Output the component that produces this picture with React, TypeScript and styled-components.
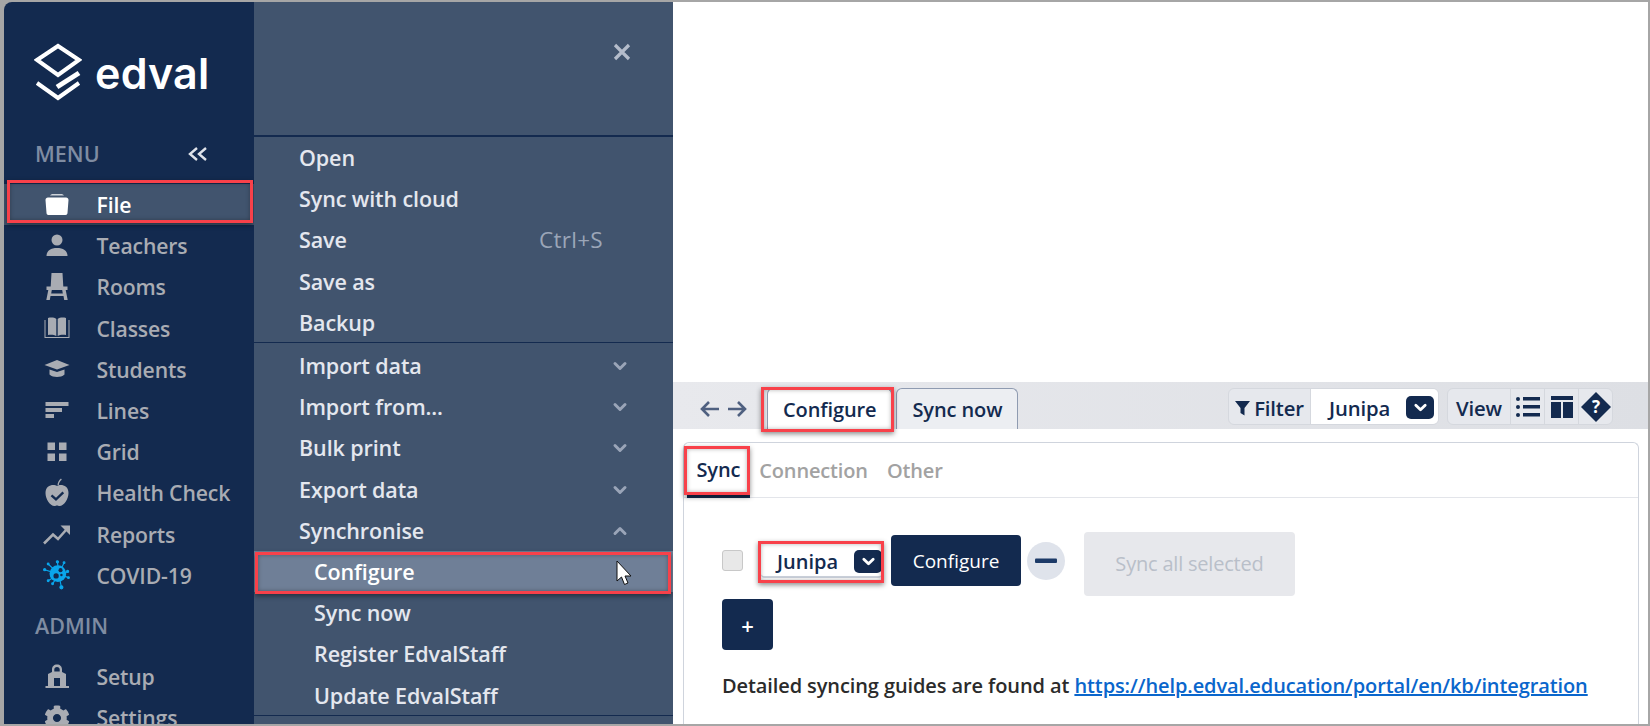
import React from "react";
import styled, { createGlobalStyle, css } from "styled-components";
import { FaCog } from "react-icons/fa";

const Global = createGlobalStyle`
  html, body { margin: 0; padding: 0; height: 726px; overflow: hidden; background: #a6a6a6; }
  * { box-sizing: border-box; }
  #root { font-family: "Open Sans", "Noto Sans", sans-serif; }
`;

const NAVY = "#132a4f";
const RED = "#f8414a";

const marked = css`
  &::after {
    content: "";
    position: absolute;
    border: 3px solid ${RED};
    box-shadow: 0 2px 5px rgba(0, 0, 0, 0.45), inset 0 0 4px rgba(0, 0, 0, 0.3);
    pointer-events: none;
    z-index: 3;
  }
`;

const Frame = styled.div`
  width: 1650px;
  height: 726px;
  padding: 2px 2px 2px 4px;
  display: flex;
  background: #a6a6a6;
  overflow: hidden;
`;

const Sidebar = styled.nav`
  width: 250px;
  flex: none;
  background: ${NAVY};
  border-top-left-radius: 8px;
  overflow: hidden;
  position: relative;
`;

const Brand = styled.div`
  height: 133px;
  padding: 41px 0 0 30px;
  display: flex;
  align-items: flex-start;
  gap: 13px;
  color: #fff;
`;

const BrandName = styled.span`
  font-family: Inter, sans-serif;
  font-weight: 600;
  font-size: 43px;
  line-height: 48px;
  letter-spacing: 0.2px;
  margin-top: 6px;
`;

const MenuHead = styled.div<{ $h: number; $lift?: number }>`
  height: ${(p) => p.$h}px;
  padding: 0 45px ${(p) => p.$lift || 0}px 31px;
  display: flex;
  align-items: center;
  justify-content: space-between;
  color: #7f8ca2;
  font-size: 21.5px;
  font-weight: 600;
`;

const MenuList = styled.div`
  display: flex;
  flex-direction: column;
`;

const MenuItem = styled.div<{ $active?: boolean }>`
  position: relative;
  height: 41.2px;
  display: flex;
  align-items: center;
  gap: 24.5px;
  padding-left: 38px;
  font-size: 21.2px;
  font-weight: 600;
  letter-spacing: -0.15px;
  color: ${(p) => (p.$active ? "#fff" : "#a9acb3")};
  background: ${(p) => (p.$active ? "#41546e" : "transparent")};
  ${(p) =>
    p.$active &&
    css`
      ${marked}
      &::after {
        left: 3px;
        right: 1px;
        top: -4px;
        bottom: 2px;
      }
    `}
`;

const IconBox = styled.span<{ $c?: string }>`
  width: 30px;
  height: 30px;
  flex: none;
  display: flex;
  align-items: center;
  justify-content: center;
  color: ${(p) => p.$c || "currentColor"};
  svg { display: block; }
`;

const Panel = styled.div`
  width: 419px;
  flex: none;
  background: #41546e;
  color: #e4e7ee;
  position: relative;
  overflow: hidden;
`;

const PanelHead = styled.div`
  height: 133px;
  display: flex;
  justify-content: flex-end;
  padding: 41px 42px 0 0;
  color: #b4bccb;
`;

const PanelSection = styled.div<{ $pad: number; $first?: boolean }>`
  border-top: ${(p) => (p.$first ? 2 : 1)}px solid ${NAVY};
  margin-top: ${(p) => (p.$first ? 0 : -1)}px;
  padding-top: ${(p) => p.$pad}px;
  display: flex;
  flex-direction: column;
`;

const PanelRow = styled.div<{ $sub?: boolean; $active?: boolean }>`
  position: relative;
  height: 41.2px;
  flex: none;
  display: flex;
  align-items: center;
  justify-content: space-between;
  padding: 0 45px 0 ${(p) => (p.$sub ? 60 : 45)}px;
  font-size: 21.5px;
  font-weight: 600;
  letter-spacing: -0.1px;
  ${(p) =>
    p.$active &&
    css`
      background: #6f7f97;
      color: #fff;
      ${marked}
      &::after {
        left: 1px;
        right: 2px;
        top: 1px;
        bottom: -2px;
      }
    `}
`;

const Shortcut = styled.span`
  color: #9ba6b8;
  font-size: 22.5px;
  font-weight: 400;
  letter-spacing: 0.3px;
  padding-right: 25px;
`;

const Caret = styled.span`
  color: #9aa5b8;
`;

const Pointer = styled.svg`
  position: absolute;
  left: 361px;
  top: 9px;
  z-index: 4;
`;

const Main = styled.main`
  flex: 1;
  min-width: 0;
  display: flex;
  flex-direction: column;
  justify-content: flex-end;
  background: #fff;
  overflow: hidden;
`;

const Toolbar = styled.div`
  height: 47px;
  flex: none;
  display: flex;
  align-items: flex-end;
  padding: 0 35px 0 27px;
  background: linear-gradient(to right, #e8e9ed, #dddfe4);
`;

const Arrows = styled.div`
  display: flex;
  gap: 7px;
  color: #4f6080;
  align-self: center;
  margin-right: 20px;
  margin-top: 7px;
`;

const PageTab = styled.div<{ $active?: boolean }>`
  position: relative;
  height: 41px;
  padding: 0 15px;
  margin-right: ${(p) => (p.$active ? 4 : 6)}px;
  display: flex;
  align-items: center;
  font-size: 20px;
  font-weight: 600;
  letter-spacing: -0.1px;
  color: ${NAVY};
  background: ${(p) => (p.$active ? "#fff" : "#eceef2")};
  border: 1px solid #8f9bb1;
  border-bottom: none;
  border-radius: 6px 6px 0 0;
  ${(p) =>
    p.$active &&
    css`
      ${marked}
      &::after {
        left: -7px;
        right: -3px;
        top: -2px;
        bottom: -3px;
      }
    `}
`;

const ToolSpacer = styled.div`
  flex: 1;
`;

const ToolGroup = styled.div<{ $gap?: boolean }>`
  height: 37px;
  display: flex;
  align-self: flex-start;
  margin: 6px 0 0 ${(p) => (p.$gap ? 8 : 0)}px;
  border: 1px solid #d5d8de;
  border-radius: 6px;
  background: #e6e8ed;
  color: ${NAVY};
  overflow: hidden;
  font-size: 20.3px;
  font-weight: 600;
  letter-spacing: -0.15px;
`;

const ToolCell = styled.div<{ $w: number; $last?: boolean; $text?: boolean }>`
  width: ${(p) => p.$w}px;
  display: flex;
  align-items: center;
  justify-content: center;
  gap: 4px;
  padding-top: ${(p) => (p.$text ? 2 : 0)}px;
  border-right: ${(p) => (p.$last ? "none" : "1px solid #d5d8de")};
`;

const SelectCell = styled.div`
  width: 127px;
  background: #fff;
  display: flex;
  align-items: center;
  justify-content: space-between;
  padding: 2px 4px 0 18px;
`;

const SelectBtn = styled.span`
  width: 28px;
  height: 23px;
  border-radius: 5px;
  background: ${NAVY};
  color: #fff;
  display: flex;
  align-items: center;
  justify-content: center;
`;

const Card = styled.section`
  height: 282px;
  flex: none;
  margin: 13px 9px 0 10px;
  border: 1px solid #cfd4dd;
  border-bottom: none;
  border-radius: 6px 6px 0 0;
  display: flex;
  flex-direction: column;
`;

const TabStrip = styled.div`
  height: 55px;
  flex: none;
  padding-left: 3px;
  display: flex;
  gap: 0;
  border-bottom: 1px solid #e3e5ea;
`;

const SubTab = styled.div<{ $active?: boolean }>`
  position: relative;
  height: 55px;
  padding: 0 9.5px;
  display: flex;
  align-items: center;
  font-size: 20px;
  font-weight: 600;
  letter-spacing: -0.15px;
  color: ${(p) => (p.$active ? NAVY : "#a2a2a2")};
  ${(p) =>
    p.$active &&
    css`
      border-bottom: 3px solid ${NAVY};
      ${marked}
      &::after {
        left: -3px;
        right: 0;
        top: 3px;
        bottom: 0;
      }
    `}
`;

const CardBody = styled.div`
  padding: 33px 0 0 38px;
  display: flex;
  flex-direction: column;
`;

const SyncRow = styled.div`
  display: flex;
  align-items: center;
  height: 65px;
`;

const SyncControls = styled.div`
  display: flex;
  align-items: center;
  margin-bottom: 6px;
`;

const Check = styled.span`
  width: 21px;
  height: 21px;
  flex: none;
  border: 1px solid #c8c8c8;
  border-radius: 3px;
  background: #e8e8e8;
`;

const RowSelect = styled.div`
  position: relative;
  width: 121px;
  height: 31px;
  margin: 3px 0 0 18px;
  padding: 0 0 0 16px;
  display: flex;
  align-items: center;
  justify-content: space-between;
  border-bottom: 2px solid #ccd2dc;
  border-radius: 4px;
  color: ${NAVY};
  font-size: 20px;
  font-weight: 600;
  ${marked}
  &::after {
    left: -3px;
    right: -2px;
    top: -6px;
    bottom: -7px;
  }
`;

const PrimaryBtn = styled.button<{ $w: number; $left?: number; $top?: number; $bold?: boolean }>`
  width: ${(p) => p.$w}px;
  height: 51px;
  flex: none;
  margin: ${(p) => p.$top || 0}px 0 0 ${(p) => p.$left || 0}px;
  padding: 0;
  border: none;
  border-radius: 4px;
  background: ${NAVY};
  color: #fff;
  font: ${(p) => (p.$bold ? "600 22px" : "400 19px")} "Open Sans", sans-serif;
  display: flex;
  align-items: center;
  justify-content: center;
`;

const RoundBtn = styled.span`
  width: 38px;
  height: 38px;
  flex: none;
  margin: 0 19px 0 6px;
  border-radius: 50%;
  background: #dfe3eb;
  display: flex;
  align-items: center;
  justify-content: center;
`;

const DisabledBtn = styled.button`
  width: 211px;
  height: 64px;
  flex: none;
  border: none;
  border-radius: 4px;
  background: #e7e8ec;
  color: #b9bfc9;
  font: 400 20px "Open Sans", sans-serif;
  letter-spacing: -0.2px;
`;

const Guide = styled.p`
  margin: 22px 0 0;
  font-size: 20px;
  font-weight: 600;
  letter-spacing: -0.1px;
  color: #2b2b2b;
  white-space: nowrap;
`;

const GuideLink = styled.a`
  color: #0a66cc;
  text-decoration: underline;
`;

const Chevron = ({ up, size = 16, sw = 3 }: { up?: boolean; size?: number; sw?: number }) => (
  <svg width={size} height={size} viewBox="0 0 16 16" fill="none" stroke="currentColor" strokeWidth={sw} strokeLinecap="round" strokeLinejoin="round">
    <path d={up ? "M3 10.5 8 5.5l5 5" : "M3 5.5l5 5 5-5"} />
  </svg>
);

const Ico = ({ children }: { children: React.ReactNode }) => (
  <svg width="30" height="30" viewBox="0 0 30 30" fill="currentColor">
    {children}
  </svg>
);

const icons: Record<string, React.ReactNode> = {
  file: (
    <Ico>
      <path d="M8 5.5c1-1.500 2-1.500 3-1.500h8c1 0 2 0 3 1.500z" opacity=".75" />
      <path d="M6 7.500h18c1.500 0 2.500 1 2.500 2.500l-1 13c-.1 1.300-.7 2-2 2H6.500c-1.300 0-1.900-.7-2-2l-1-13C3.500 8.500 4.500 7.500 6 7.500z" />
    </Ico>
  ),
  person: (
    <Ico>
      <circle cx="15" cy="9" r="5.500" />
      <path d="M4.500 25c0-5.500 4.500-8 10.500-8s10.500 2.500 10.500 8z" />
    </Ico>
  ),
  chair: (
    <Ico>
      <path fillRule="evenodd" d="M9.500 1h11l.8 13.500H8.700zM4.500 14.500h21v3.500h-1.800l2 10h-3.500l-.7-4H8.500l-.7 4H4.300l2-10H4.500zM9.800 18l-.6 3.500h11.600l-.6-3.500z" />
    </Ico>
  ),
  book: (
    <Ico>
      <path d="M6 5c3-.8 6.500-.5 8.300 1v17c-2-1.300-5.300-1.600-8.300-1zM24 5c-3-.8-6.500-.5-8.300 1v17c2-1.300 5.300-1.600 8.300-1z" />
      <path d="M2.500 7v18h25V7h-1v17H3.500V7z" />
    </Ico>
  ),
  cap: (
    <Ico>
      <path d="M15 6 2.500 11 15 15.500 27.500 11z" />
      <path d="M7.500 15.500v5c2 1.800 4.700 2.500 7.500 2.500s5.500-.7 7.500-2.500v-5L15 18z" />
    </Ico>
  ),
  lines: (
    <Ico>
      <rect x="3.500" y="6" width="23" height="4" />
      <rect x="3.500" y="12" width="16.500" height="4" />
      <rect x="3.500" y="18" width="8.500" height="4" />
    </Ico>
  ),
  grid: (
    <Ico>
      <rect x="5.500" y="5.500" width="7.500" height="7.500" />
      <rect x="17" y="5.500" width="7.500" height="7.500" />
      <rect x="5.500" y="16.500" width="7.500" height="7.500" />
      <rect x="17" y="16.500" width="7.500" height="7.500" />
    </Ico>
  ),
  apple: (
    <Ico>
      <path fillRule="evenodd" d="M15 8c3-2 11.500-1.500 11.500 7 0 6-4.500 13-9 13-1 0-1.500-.5-2.500-.5s-1.500.5-2.500.5c-4.500 0-9-7-9-13 0-8.500 8.500-9 11.500-7zM20.500 13.500l-6.500 6.300-3.800-3.300-1.500 1.700 5.300 4.700 8.100-7.700z" />
      <path d="M15.500 7c0-2.500 1.500-5 3.500-6.500l.8 1.200C18 3 16.800 5 16.800 7z" />
    </Ico>
  ),
  trend: (
    <Ico>
      <path d="M2 24.500l9-9 5 4.500 8-9" fill="none" stroke="currentColor" strokeWidth="2.600" />
      <path d="M18.500 6.500H28V16z" />
    </Ico>
  ),
  virus: (
    <svg width="34" height="34" viewBox="0 0 34 34">
      <g stroke="#0aa6ec" strokeWidth="1.300" fill="#0aa6ec">
        <path d="M19 16 3 11M19 16l10-2.500M19 16l-1.500-14M19 16l6-13M19 16l11 4M19 16l-12 7.500M19 16l3 15M19 16l-7 11M19 16 7 4.500" fill="none" />
        <circle cx="3" cy="11" r="1.200" />
        <circle cx="29" cy="13" r="1.200" />
        <circle cx="17.500" cy="2" r="1.200" />
        <circle cx="25" cy="3" r="1" />
        <circle cx="30" cy="20" r="1" />
        <circle cx="7" cy="23.500" r="1" />
        <circle cx="22" cy="31" r="1.700" />
        <circle cx="12" cy="27" r="1" />
        <circle cx="7" cy="4.500" r="1" />
      </g>
      <circle cx="18" cy="15.500" r="9.500" fill="#0aa6ec" />
      <circle cx="21" cy="11.500" r="2.300" fill={NAVY} />
      <circle cx="16" cy="18" r="3" fill={NAVY} />
      <circle cx="22" cy="17" r="1.400" fill={NAVY} />
    </svg>
  ),
  lock: (
    <Ico>
      <path fillRule="evenodd" d="M15 3.500c3 0 5 2 5 5v2.500l4 2v12H27v2H3.500v-2H6v-12l4-2V8.500c0-3 2-5 5-5zM15 6c-1.700 0-2.700 1-2.700 2.500V10.500h5.400V8.500C17.700 7 16.700 6 15 6zM12 17v8h6v-8z" />
    </Ico>
  ),
  gear: <FaCog size={26} />,
};

const mainItems: [string, string][] = [
  ["file", "File"],
  ["person", "Teachers"],
  ["chair", "Rooms"],
  ["book", "Classes"],
  ["cap", "Students"],
  ["lines", "Lines"],
  ["grid", "Grid"],
  ["apple", "Health Check"],
  ["trend", "Reports"],
  ["virus", "COVID-19"],
];

const Logo = () => (
  <svg width="48" height="58" viewBox="0 0 48 58" fill="none" stroke="#fff" strokeWidth="4" strokeLinejoin="miter">
    <path d="M24 3 45 17 24 32 3 17z" />
    <path d="M3 40 24 55 45 40" />
    <path d="M23 44 45 30" strokeWidth="5" />
  </svg>
);

export default function App() {
  return (
    <>
      <Global />
      <Frame>
        <Sidebar>
          <Brand>
            <Logo />
            <BrandName>edval</BrandName>
          </Brand>
          <MenuHead $h={49} $lift={12}>
            MENU
            <svg width="22" height="16" viewBox="0 0 22 16" fill="none" stroke="#dfe3ea" strokeWidth="2.400">
              <path d="M10 2 3 8l7 6M19 2l-7 6 7 6" />
            </svg>
          </MenuHead>
          <MenuList>
            {mainItems.map(([ic, label]) => (
              <MenuItem key={label} $active={label === "File"}>
                <IconBox>{icons[ic]}</IconBox>
                {label}
              </MenuItem>
            ))}
          </MenuList>
          <MenuHead $h={60}>ADMIN</MenuHead>
          <MenuList>
            <MenuItem>
              <IconBox>{icons.lock}</IconBox>Setup
            </MenuItem>
            <MenuItem>
              <IconBox>{icons.gear}</IconBox>Settings
            </MenuItem>
          </MenuList>
        </Sidebar>

        <Panel>
          <PanelHead>
            <svg width="18" height="18" viewBox="0 0 18 18" stroke="currentColor" strokeWidth="3.200">
              <path d="M2 2l14 14M16 2 2 16" />
            </svg>
          </PanelHead>
          <PanelSection $pad={0} $first>
            <PanelRow>Open</PanelRow>
            <PanelRow>Sync with cloud</PanelRow>
            <PanelRow>
              Save<Shortcut>Ctrl+S</Shortcut>
            </PanelRow>
            <PanelRow>Save as</PanelRow>
            <PanelRow>Backup</PanelRow>
          </PanelSection>
          <PanelSection $pad={2}>
            {["Import data", "Import from...", "Bulk print", "Export data"].map((t) => (
              <PanelRow key={t}>
                {t}
                <Caret><Chevron /></Caret>
              </PanelRow>
            ))}
            <PanelRow>
              Synchronise
              <Caret><Chevron up /></Caret>
            </PanelRow>
            <PanelRow $sub $active>
              Configure
              <Pointer width="20" height="28" viewBox="0 0 20 28">
                <path d="M2 1v20l4.500-4 3 7.500 3.500-1.500-3-7h6z" fill="#fff" stroke="#111" strokeWidth="1" />
              </Pointer>
            </PanelRow>
            <PanelRow $sub>Sync now</PanelRow>
            <PanelRow $sub>Register EdvalStaff</PanelRow>
            <PanelRow $sub>Update EdvalStaff</PanelRow>
          </PanelSection>
          <PanelSection $pad={0} />
        </Panel>

        <Main>
          <Toolbar>
            <Arrows>
              <svg width="20" height="18" viewBox="0 0 20 18" fill="none" stroke="currentColor" strokeWidth="2.600">
                <path d="M19 9H2M9 2 2 9l7 7" />
              </svg>
              <svg width="20" height="18" viewBox="0 0 20 18" fill="none" stroke="currentColor" strokeWidth="2.600">
                <path d="M1 9h17M11 2l7 7-7 7" />
              </svg>
            </Arrows>
            <PageTab $active>Configure</PageTab>
            <PageTab>Sync now</PageTab>
            <ToolSpacer />
            <ToolGroup>
              <ToolCell $w={82} $text>
                <svg width="15" height="16" viewBox="0 0 15 16" fill={NAVY}>
                  <path d="M0 1h15L9.500 8v7.500L5.500 13V8z" />
                </svg>
                Filter
              </ToolCell>
              <SelectCell>
                Junipa
                <SelectBtn><Chevron size={15} /></SelectBtn>
              </SelectCell>
            </ToolGroup>
            <ToolGroup $gap>
              <ToolCell $w={63} $text>View</ToolCell>
              <ToolCell $w={34}>
                <svg width="26" height="24" viewBox="0 0 26 24" fill={NAVY}>
                  <circle cx="3" cy="4" r="2" />
                  <circle cx="3" cy="12" r="2" />
                  <circle cx="3" cy="20" r="2" />
                  <rect x="8" y="2" width="17" height="3.500" />
                  <rect x="8" y="10" width="17" height="3.500" />
                  <rect x="8" y="18" width="17" height="3.500" />
                </svg>
              </ToolCell>
              <ToolCell $w={34}>
                <svg width="24" height="24" viewBox="0 0 24 24" fill={NAVY}>
                  <rect x="1" y="1" width="22" height="4" />
                  <rect x="1" y="7" width="10" height="16" />
                  <rect x="13" y="7" width="10" height="16" />
                </svg>
              </ToolCell>
              <ToolCell $w={33} $last>
                <svg width="32" height="32" viewBox="0 0 32 32">
                  <path d="M16 1 31 16 16 31 1 16z" fill={NAVY} />
                  <text x="16" y="22" textAnchor="middle" fill="#fff" fontSize="17" fontWeight="700" fontFamily="Open Sans">?</text>
                </svg>
              </ToolCell>
            </ToolGroup>
          </Toolbar>
          <Card>
            <TabStrip>
              <SubTab $active>Sync</SubTab>
              <SubTab>Connection</SubTab>
              <SubTab>Other</SubTab>
            </TabStrip>
            <CardBody>
              <SyncRow>
                <SyncControls>
                  <Check />
                  <RowSelect>
                    Junipa
                    <SelectBtn><Chevron size={15} /></SelectBtn>
                  </RowSelect>
                  <PrimaryBtn $w={130} $left={9}>Configure</PrimaryBtn>
                  <RoundBtn>
                    <svg width="22" height="6" viewBox="0 0 22 6"><rect width="22" height="4.500" y="0.500" rx="1" fill="#1c3a68" /></svg>
                  </RoundBtn>
                </SyncControls>
                <DisabledBtn>Sync all selected</DisabledBtn>
              </SyncRow>
              <PrimaryBtn $w={51} $top={3} $bold>+</PrimaryBtn>
              <Guide>
                Detailed syncing guides are found at{" "}
                <GuideLink>https://help.edval.education/portal/en/kb/integration</GuideLink>
              </Guide>
            </CardBody>
          </Card>
        </Main>
      </Frame>
    </>
  );
}
